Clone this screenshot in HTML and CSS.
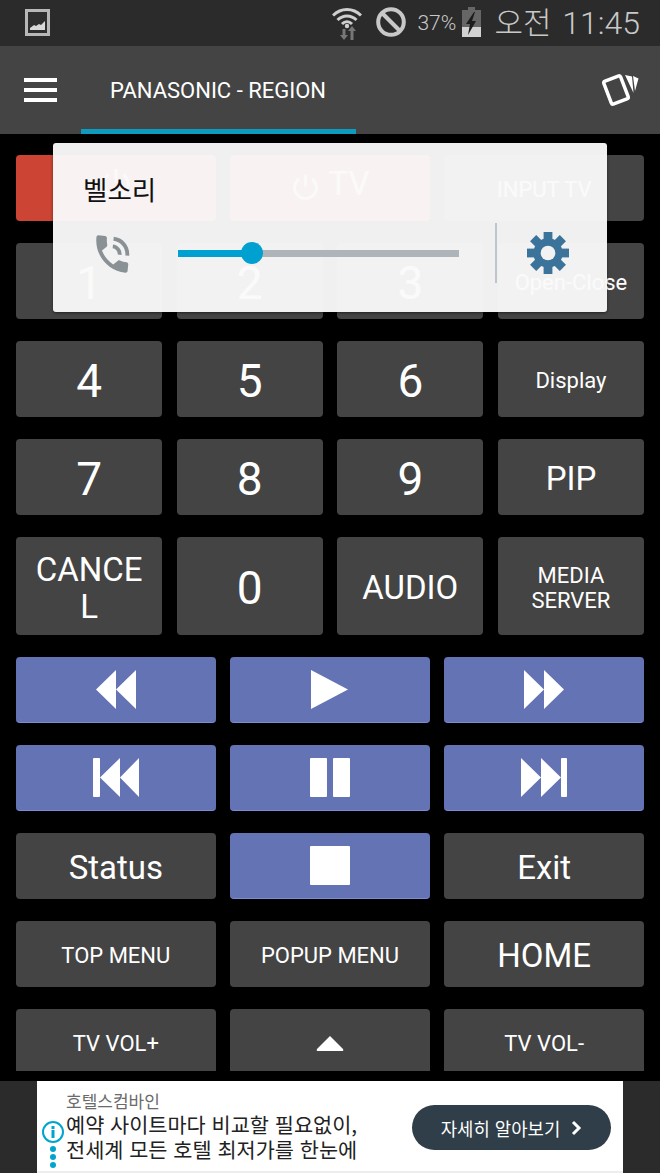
FILE: index.html
```html
<!DOCTYPE html>
<html lang="ko">
<head>
    <meta charset="UTF-8">
    <meta name="viewport" content="width=device-width, initial-scale=1.0">
    <title>Panasonic Remote</title>
    <link rel="stylesheet" href="styles.css">
</head>
<body>
    <div class="screen">
        <div class="status-bar">
            <svg class="notif-icon" width="25" height="27" viewBox="0 0 25 27">
                <rect x="1.500" y="1.500" width="22" height="24" fill="#2f2f2f" stroke="#b8b8b8" stroke-width="3"/>
                <path d="M5 21v-2l4-3 2 1 3-2 2 1 4-4v9z" fill="#d8d8d8"/>
            </svg>
            <div class="status-right">
                <svg class="wifi-icon" width="30" height="34" viewBox="0 0 30 34">
                    <g fill="none" stroke="#cfcfcf" stroke-width="3">
                        <path d="M1 9.500c8-8 20-8 28 0"/>
                        <path d="M5.500 14c5.500-5.500 13.500-5.500 19 0"/>
                        <path d="M10 18c3-3 7-3 10 0"/>
                    </g>
                    <circle cx="15" cy="20" r="2.200" fill="#cfcfcf"/>
                    <path d="M10.500 23h3v6h2.500l-4 5-4-5h2.500z" fill="#777"/>
                    <path d="M20 20l4 5h-2.500v9h-3v-9H16z" fill="#777"/>
                </svg>
                <svg class="block-icon" width="30" height="30" viewBox="0 0 30 30">
                    <circle cx="15" cy="15" r="12.800" fill="none" stroke="#c8c8c8" stroke-width="4"/>
                    <path d="M6 6l18 18" stroke="#c8c8c8" stroke-width="4"/>
                </svg>
                <span class="battery-text">37%</span>
                <svg class="battery-icon" width="19" height="30" viewBox="0 0 19 30">
                    <path d="M6 0h7v3h6v27H0V3h6z" fill="#666"/>
                    <rect y="20" width="19" height="10" fill="#d2d2d2"/>
                    <path d="M12 5L4 17h4l-2 11 8-14h-4l3-9z" fill="#1d1d1d"/>
                </svg>
                <span class="clock"><span class="clock-ko">오전</span> 11:45</span>
            </div>
        </div>

        <div class="toolbar">
            <div class="hamburger"><span></span><span></span><span></span></div>
            <div class="tab">PANASONIC - REGION</div>
            <svg class="cards-icon" width="40" height="38" viewBox="0 0 40 38">
                <rect x="7" y="6.750" width="18" height="24.500" rx="2" transform="rotate(-21 16 19)" fill="none" stroke="#fff" stroke-width="3.500"/>
                <path d="M25 4l7 1.500L33.500 22zM33 5l5.500 2.500L35 20z" fill="#fff"/>
            </svg>
        </div>

        <div class="remote">
            <div class="row row-3 row-short">
                <button class="btn btn-red btn-power">
                    <svg width="30" height="34" viewBox="0 0 32 36"><path d="M16 3v15M8 9a13 13 0 1 0 16 0" fill="none" stroke="#fff" stroke-width="3"/></svg>
                </button>
                <button class="btn btn-red btn-tv">
                    <svg class="tv-power" width="29" height="29" viewBox="0 0 32 32"><path d="M16 3v13M9 7.500a12 12 0 1 0 14 0" fill="none" stroke="#fff" stroke-width="3"/></svg>
                    <span class="tv-label">TV</span>
                </button>
                <button class="btn">INPUT TV</button>
            </div>
            <div class="row row-4">
                <button class="btn btn-digit">1</button>
                <button class="btn btn-digit">2</button>
                <button class="btn btn-digit">3</button>
                <button class="btn">Open-Close</button>
            </div>
            <div class="row row-4">
                <button class="btn btn-digit">4</button>
                <button class="btn btn-digit">5</button>
                <button class="btn btn-digit">6</button>
                <button class="btn">Display</button>
            </div>
            <div class="row row-4">
                <button class="btn btn-digit">7</button>
                <button class="btn btn-digit">8</button>
                <button class="btn btn-digit">9</button>
                <button class="btn btn-large">PIP</button>
            </div>
            <div class="row row-4 row-tall">
                <button class="btn btn-large btn-cancel">CANCEL</button>
                <button class="btn btn-digit">0</button>
                <button class="btn btn-large">AUDIO</button>
                <button class="btn btn-media">MEDIA SERVER</button>
            </div>
            <div class="row row-3 row-short">
                <button class="btn btn-blue">
                    <svg width="40" height="39" viewBox="0 0 40 39"><path d="M20 0v39L0 19.500zM40 0v39L20 19.500z" fill="#fff"/></svg>
                </button>
                <button class="btn btn-blue">
                    <svg width="37" height="39" viewBox="0 0 37 39"><path d="M0 0l37 19.500L0 39z" fill="#fff"/></svg>
                </button>
                <button class="btn btn-blue">
                    <svg width="40" height="39" viewBox="0 0 40 39"><path d="M0 0l20 19.500L0 39zM20 0l20 19.500L20 39z" fill="#fff"/></svg>
                </button>
            </div>
            <div class="row row-3 row-short">
                <button class="btn btn-blue">
                    <svg width="46" height="39" viewBox="0 0 46 39"><path d="M0 1q0-1 1-1h5q1 0 1 1v37q0 1-1 1H1q-1 0-1-1zM27 0v39L7 19.500zM46 0v39L27 19.500z" fill="#fff"/></svg>
                </button>
                <button class="btn btn-blue">
                    <svg width="40" height="39" viewBox="0 0 40 39"><rect width="17" height="39" rx="1" fill="#fff"/><rect x="23" width="17" height="39" rx="1" fill="#fff"/></svg>
                </button>
                <button class="btn btn-blue">
                    <svg width="46" height="39" viewBox="0 0 46 39"><path d="M0 0l20 19.500L0 39zM20 0l20 19.500L20 39zM40 1q0-1 1-1h4q1 0 1 1v37q0 1-1 1h-4q-1 0-1-1z" fill="#fff"/></svg>
                </button>
            </div>
            <div class="row row-3 row-short">
                <button class="btn btn-large">Status</button>
                <button class="btn btn-blue">
                    <svg width="40" height="39" viewBox="0 0 40 39"><rect width="40" height="39" rx="1" fill="#fff"/></svg>
                </button>
                <button class="btn btn-large">Exit</button>
            </div>
            <div class="row row-3 row-short">
                <button class="btn btn-menu">TOP MENU</button>
                <button class="btn btn-menu">POPUP MENU</button>
                <button class="btn btn-large">HOME</button>
            </div>
            <div class="row row-3 row-short">
                <button class="btn btn-menu">TV VOL+</button>
                <button class="btn">
                    <svg width="28" height="16" viewBox="0 0 28 16"><path d="M14 1l13 13q1 2-1 2H2q-2 0-1-2z" fill="#fff"/></svg>
                </button>
                <button class="btn btn-menu">TV VOL-</button>
            </div>
        </div>

        <div class="ad-bar">
            <div class="ad">
                <div class="ad-badges">
                    <svg width="24" height="24" viewBox="0 0 24 24">
                        <circle cx="12" cy="12" r="10" fill="#fff" stroke="#00a5cf" stroke-width="2"/>
                        <rect x="10.500" y="10" width="3" height="8" fill="#00a5cf"/>
                        <rect x="10.500" y="6" width="3" height="3" fill="#00a5cf"/>
                    </svg>
                    <span class="ad-dot"></span><span class="ad-dot"></span><span class="ad-dot"></span>
                </div>
                <div class="ad-text">
                    <div class="ad-brand">호텔스컴바인</div>
                    <div class="ad-title">예약 사이트마다 비교할 필요없이,<br>전세계 모든 호텔 최저가를 한눈에</div>
                </div>
                <div class="ad-button">
                    자세히 알아보기
                    <svg width="12" height="16" viewBox="0 0 12 16"><path d="M3 2l6 6-6 6" fill="none" stroke="#fff" stroke-width="3"/></svg>
                </div>
            </div>
        </div>

        <div class="popup">
            <div class="popup-title">벨소리</div>
            <div class="popup-row">
                <svg class="phone-icon" width="46" height="46" viewBox="0 0 24 24">
                    <path transform="rotate(6 12 12)" d="M20 15.500c-1.250 0-2.450-.2-3.570-.57-.35-.11-.74-.03-1.020.24l-2.200 2.200c-2.830-1.440-5.150-3.750-6.590-6.590l2.200-2.210c.28-.26.36-.65.25-1C8.700 6.450 8.500 5.250 8.500 4c0-.55-.45-1-1-1H4c-.55 0-1 .45-1 1 0 9.390 7.610 17 17 17 .55 0 1-.45 1-1v-3.500c0-.55-.45-1-1-1zM19 12h2c0-4.970-4.030-9-9-9v2c3.870 0 7 3.130 7 7zm-4 0h2c0-2.760-2.240-5-5-5v2c1.660 0 3 1.340 3 3z" fill="#8a9194"/>
                </svg>
                <div class="slider">
                    <div class="slider-fill"></div>
                    <div class="slider-thumb"></div>
                </div>
                <div class="popup-divider"></div>
                <svg class="gear-icon" width="42" height="42" viewBox="-21.500 -21.500 43 43">
                    <g fill="#3b739a">
                        <circle r="15"/>
                        <rect x="-4.500" y="-21.500" width="9" height="43"/>
                        <rect x="-4.500" y="-21.500" width="9" height="43" transform="rotate(45)"/>
                        <rect x="-4.500" y="-21.500" width="9" height="43" transform="rotate(90)"/>
                        <rect x="-4.500" y="-21.500" width="9" height="43" transform="rotate(135)"/>
                    </g>
                    <circle r="7.500" fill="#f2f2f2"/>
                </svg>
            </div>
        </div>
    </div>
</body>
</html>
```

FILE: styles.css
```css
* {
    box-sizing: border-box;
}
body {
    margin: 0;
    font-family: Roboto, "Noto Sans CJK KR", sans-serif;
    background: #000;
    color: white;
}
.screen {
    position: relative;
    width: 660px;
    height: 1173px;
    overflow: hidden;
    display: flex;
    flex-direction: column;
}
.status-bar {
    height: 46px;
    flex: none;
    background: #2b2b2b;
    color: #c8c8c8;
    display: flex;
    align-items: center;
    justify-content: space-between;
    padding: 0 20px 2px 25px;
}
.status-right {
    display: flex;
    align-items: center;
}
.wifi-icon {
    margin-right: 14px;
    margin-top: 2px;
}
.block-icon {
    margin-right: 11px;
}
.battery-text {
    font-size: 21px;
    font-weight: 300;
    width: 45px;
    margin-top: 2px;
}
.battery-icon {
    margin-right: 13px;
}
.clock {
    font-size: 32px;
    font-weight: 300;
    line-height: 46px;
}
.clock-ko {
    font-family: "Noto Sans CJK KR", sans-serif;
    font-size: 31px;
    font-weight: 300;
    margin-right: 3px;
}
.toolbar {
    height: 88px;
    flex: none;
    background: #444;
    display: flex;
    align-items: stretch;
    padding: 0 20px 0 24px;
}
.hamburger {
    width: 33px;
    margin-right: 24px;
    display: flex;
    flex-direction: column;
    justify-content: center;
    gap: 6.500px;
}
.hamburger span {
    height: 3.500px;
    background: #fff;
}
.tab {
    width: 275px;
    padding-left: 29px;
    font-size: 22px;
    line-height: 90px;
    border-bottom: 5px solid #0d9bc0;
    white-space: nowrap;
}
.cards-icon {
    margin-left: auto;
    align-self: center;
}
.remote {
    height: 937px;
    flex: none;
    overflow: hidden;
    padding: 21px 16px 0;
    display: flex;
    flex-direction: column;
    gap: 22px;
}
.row {
    flex: none;
    height: 76px;
    display: grid;
    gap: 14.500px;
}
.row-3 {
    grid-template-columns: repeat(3, 1fr);
}
.row-4 {
    grid-template-columns: repeat(4, 1fr);
}
.row-short {
    height: 66px;
}
.row-tall {
    height: 98px;
}
.btn {
    background: #444;
    color: white;
    border: none;
    border-radius: 4px;
    padding: 2px 0 0;
    font-family: inherit;
    font-size: 22px;
    display: flex;
    align-items: center;
    justify-content: center;
    text-align: center;
}
.btn-digit {
    font-size: 46px;
    padding-top: 4px;
}
.btn-large {
    font-size: 33px;
    padding-top: 3px;
}
.btn-menu {
    font-size: 22px;
    padding-top: 3px;
}
.btn-media {
    font-size: 22px;
    line-height: 25px;
    padding: 4px 20px 0;
}
.btn-cancel {
    line-height: 37px;
    padding: 4px 15px 0;
    word-break: break-all;
}
.btn-red {
    background: #cc4433;
}
.btn-power {
    padding: 0 0 10px;
}
.btn-tv {
    gap: 9px;
    padding: 0;
}
.tv-power {
    margin-top: -4px;
}
.tv-label {
    font-size: 33px;
    margin-top: -9px;
}
.btn-blue {
    background: #6473b3;
    border-bottom: 1px solid #7b8bd4;
    padding: 0;
}
.ad-bar {
    height: 92px;
    flex: none;
    margin-top: 10px;
    background: #2b2b2b;
    display: flex;
    justify-content: center;
}
.ad {
    width: 586px;
    background: #fff;
    border-bottom: 2px solid #eee;
    color: #222;
    display: flex;
    align-items: center;
    padding: 0 12px 0 4px;
}
.ad-badges {
    width: 24px;
    align-self: flex-end;
    display: flex;
    flex-direction: column;
    align-items: center;
    gap: 2px;
    padding-bottom: 3px;
}
.ad-dot {
    width: 6px;
    height: 6px;
    border-radius: 50%;
    background: #00a5cf;
}
.ad-text {
    margin-left: 1px;
    font-family: "Noto Sans CJK KR", sans-serif;
}
.ad-brand {
    font-size: 17px;
    line-height: 22px;
    color: #6b6b6b;
}
.ad-title {
    font-size: 20.800px;
    line-height: 25px;
}
.ad-button {
    margin-left: auto;
    width: 199px;
    height: 45px;
    margin-top: 3px;
    border-radius: 23px;
    background: #2f3e48;
    color: #fff;
    font-family: "Noto Sans CJK KR", sans-serif;
    font-size: 17.800px;
    display: flex;
    align-items: center;
    justify-content: center;
    gap: 10px;
}
.popup {
    position: absolute;
    left: 53px;
    top: 143px;
    width: 554px;
    height: 169px;
    background: rgba(250, 250, 250, 0.96);
    border-radius: 3px;
    box-shadow: 0 1px 3px rgba(0, 0, 0, 0.5);
    color: #111;
    padding-top: 30px;
}
.popup-title {
    font-family: "Noto Sans CJK KR", sans-serif;
    font-size: 26.500px;
    line-height: 32px;
    padding-left: 30px;
}
.popup-row {
    display: flex;
    align-items: center;
    height: 60px;
    margin-top: 18px;
    padding-left: 36px;
}
.phone-icon {
    margin-top: 1px;
}
.slider {
    position: relative;
    width: 281px;
    height: 7px;
    margin-left: 43px;
    background: #adb5ba;
}
.slider-fill {
    width: 74px;
    height: 100%;
    background: #00a0d0;
}
.slider-thumb {
    position: absolute;
    left: 63px;
    top: -7.500px;
    width: 22px;
    height: 22px;
    border-radius: 50%;
    background: #00a0d0;
}
.popup-divider {
    width: 2px;
    height: 60px;
    margin-left: 36px;
    background: #bcc4cc;
}
.gear-icon {
    margin-left: 30px;
    margin-top: -1px;
}
```
